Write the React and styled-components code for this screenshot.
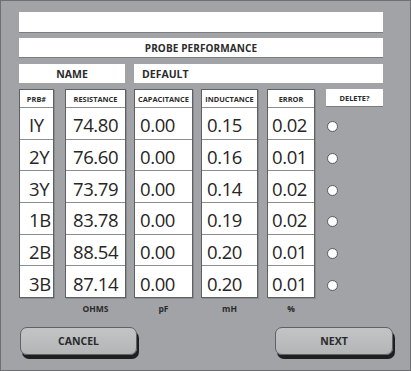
import React from "react";
import styled, { createGlobalStyle } from "styled-components";

const GlobalStyle = createGlobalStyle`
  html, body {
    margin: 0;
    padding: 0;
    background: #a2a3a6;
  }
  * {
    box-sizing: border-box;
  }
`;

const probes = [
  { id: "IY", res: "74.80", cap: "0.00", ind: "0.15", err: "0.02" },
  { id: "2Y", res: "76.60", cap: "0.00", ind: "0.16", err: "0.01" },
  { id: "3Y", res: "73.79", cap: "0.00", ind: "0.14", err: "0.02" },
  { id: "1B", res: "83.78", cap: "0.00", ind: "0.19", err: "0.02" },
  { id: "2B", res: "88.54", cap: "0.00", ind: "0.20", err: "0.01" },
  { id: "3B", res: "87.14", cap: "0.00", ind: "0.20", err: "0.01" },
];

const columns = [
  { key: "id", title: "PRB#", width: 35, gap: 0, pad: 9 },
  { key: "res", title: "RESISTANCE", width: 61, gap: 11, pad: 7, unit: "OHMS" },
  { key: "cap", title: "CAPACITANCE", width: 59, gap: 8, pad: 5, unit: "pF" },
  { key: "ind", title: "INDUCTANCE", width: 57, gap: 8, pad: 5, unit: "mH" },
  { key: "err", title: "ERROR", width: 48, gap: 9, pad: 4, unit: "%" },
];

const Screen = styled.div`
  width: 411px;
  height: 371px;
  background: #a2a3a6;
  border: 1px solid #6e6f72;
  padding: 11px 0 0 18px;
  font-family: "Open Sans", "Noto Sans", sans-serif;
  color: #2b2b2b;
  overflow: hidden;
`;

const Bar = styled.div`
  width: 364px;
  height: ${(p) => p.$h}px;
  margin-top: ${(p) => p.$mt || 0}px;
  background: #fff;
  border-bottom: 1px solid #7c7d80;
  display: flex;
  align-items: center;
  justify-content: center;
  font-size: 10px;
  font-weight: 700;
  letter-spacing: 0.1px;
`;

const NameRow = styled.div`
  display: flex;
  gap: 9px;
  width: 364px;
  height: 19px;
  margin-top: 6px;
`;

const NameCell = styled.div`
  width: ${(p) => (p.$w ? `${p.$w}px` : "auto")};
  flex: ${(p) => (p.$w ? "none" : "1")};
  background: #fff;
  display: flex;
  align-items: center;
  justify-content: ${(p) => (p.$center ? "center" : "flex-start")};
  padding-left: ${(p) => (p.$center ? 0 : 8)}px;
  font-size: 10.5px;
  font-weight: 700;
`;

const Table = styled.div`
  display: flex;
  margin-top: 6px;
`;

const Column = styled.div`
  width: ${(p) => p.$w}px;
  margin-left: ${(p) => p.$gap}px;
  display: flex;
  flex-direction: column;
`;

const ColBox = styled.div`
  height: 209px;
  background: #fff;
  border: 1px solid #5f6063;
  box-shadow: 1px 1px 0 #8a8b8e;
  display: flex;
  flex-direction: column;
`;

const Head = styled.div`
  height: 18px;
  flex: none;
  display: flex;
  align-items: center;
  justify-content: center;
  font-size: 7.4px;
  font-weight: 700;
  border-bottom: 1px solid #8d8e91;
  white-space: nowrap;
`;

const Cell = styled.div`
  flex: 1;
  display: flex;
  align-items: center;
  padding: 3px 0 0 ${(p) => p.$pad}px;
  font-size: 18.5px;
  letter-spacing: -0.4px;
  color: #262626;
  border-top: ${(p) => (p.$first ? "none" : "1px solid #8d8e91")};
`;

const Unit = styled.div`
  height: 12px;
  margin-top: 5px;
  text-align: center;
  font-size: 8.5px;
  font-weight: 700;
  line-height: 12px;
`;

const DeleteHead = styled.div`
  width: 57px;
  height: 18px;
  background: #fff;
  border-bottom: 1px solid #7c7d80;
  display: flex;
  align-items: center;
  justify-content: center;
  font-size: 7.4px;
  font-weight: 700;
`;

const RadioList = styled.div`
  height: 190px;
  margin-top: 2px;
  display: flex;
  flex-direction: column;
`;

const RadioSlot = styled.div`
  flex: 1;
  display: flex;
  align-items: center;
  padding: 4px 0 0 1px;
`;

const Radio = styled.span`
  width: 11px;
  height: 11px;
  border-radius: 50%;
  background: #fff;
  border: 1px solid #5a5b5e;
`;

const ButtonRow = styled.div`
  display: flex;
  justify-content: space-between;
  width: 374px;
  margin-top: 12px;
  padding-left: 1px;
`;

const Button = styled.div`
  width: ${(p) => p.$w}px;
  height: 28px;
  border-radius: 7px;
  border: 1px solid #606164;
  background: linear-gradient(#c3c4c6, #b4b5b7);
  box-shadow: 2px 4px 0 #1f1f21;
  display: flex;
  align-items: center;
  justify-content: center;
  font-size: 10.5px;
  font-weight: 700;
  color: #2a2a2a;
`;

const App = () => {
  return (
    <>
      <GlobalStyle />
      <Screen>
        <Bar $h={21} />
        <Bar $h={20} $mt={5}>PROBE PERFORMANCE</Bar>
        <NameRow>
          <NameCell $w={106} $center>NAME</NameCell>
          <NameCell>DEFAULT</NameCell>
        </NameRow>
        <Table>
          {columns.map((col) => (
            <Column key={col.key} $w={col.width} $gap={col.gap}>
              <ColBox>
                <Head>{col.title}</Head>
                {probes.map((p, i) => (
                  <Cell key={p.id} $pad={col.pad} $first={i === 0}>
                    {p[col.key]}
                  </Cell>
                ))}
              </ColBox>
              {col.unit && <Unit>{col.unit}</Unit>}
            </Column>
          ))}
          <Column $w={57} $gap={11}>
            <DeleteHead>DELETE?</DeleteHead>
            <RadioList>
              {probes.map((p) => (
                <RadioSlot key={p.id}>
                  <Radio />
                </RadioSlot>
              ))}
            </RadioList>
          </Column>
        </Table>
        <ButtonRow>
          <Button $w={117}>CANCEL</Button>
          <Button $w={118}>NEXT</Button>
        </ButtonRow>
      </Screen>
    </>
  );
};

export default App;
